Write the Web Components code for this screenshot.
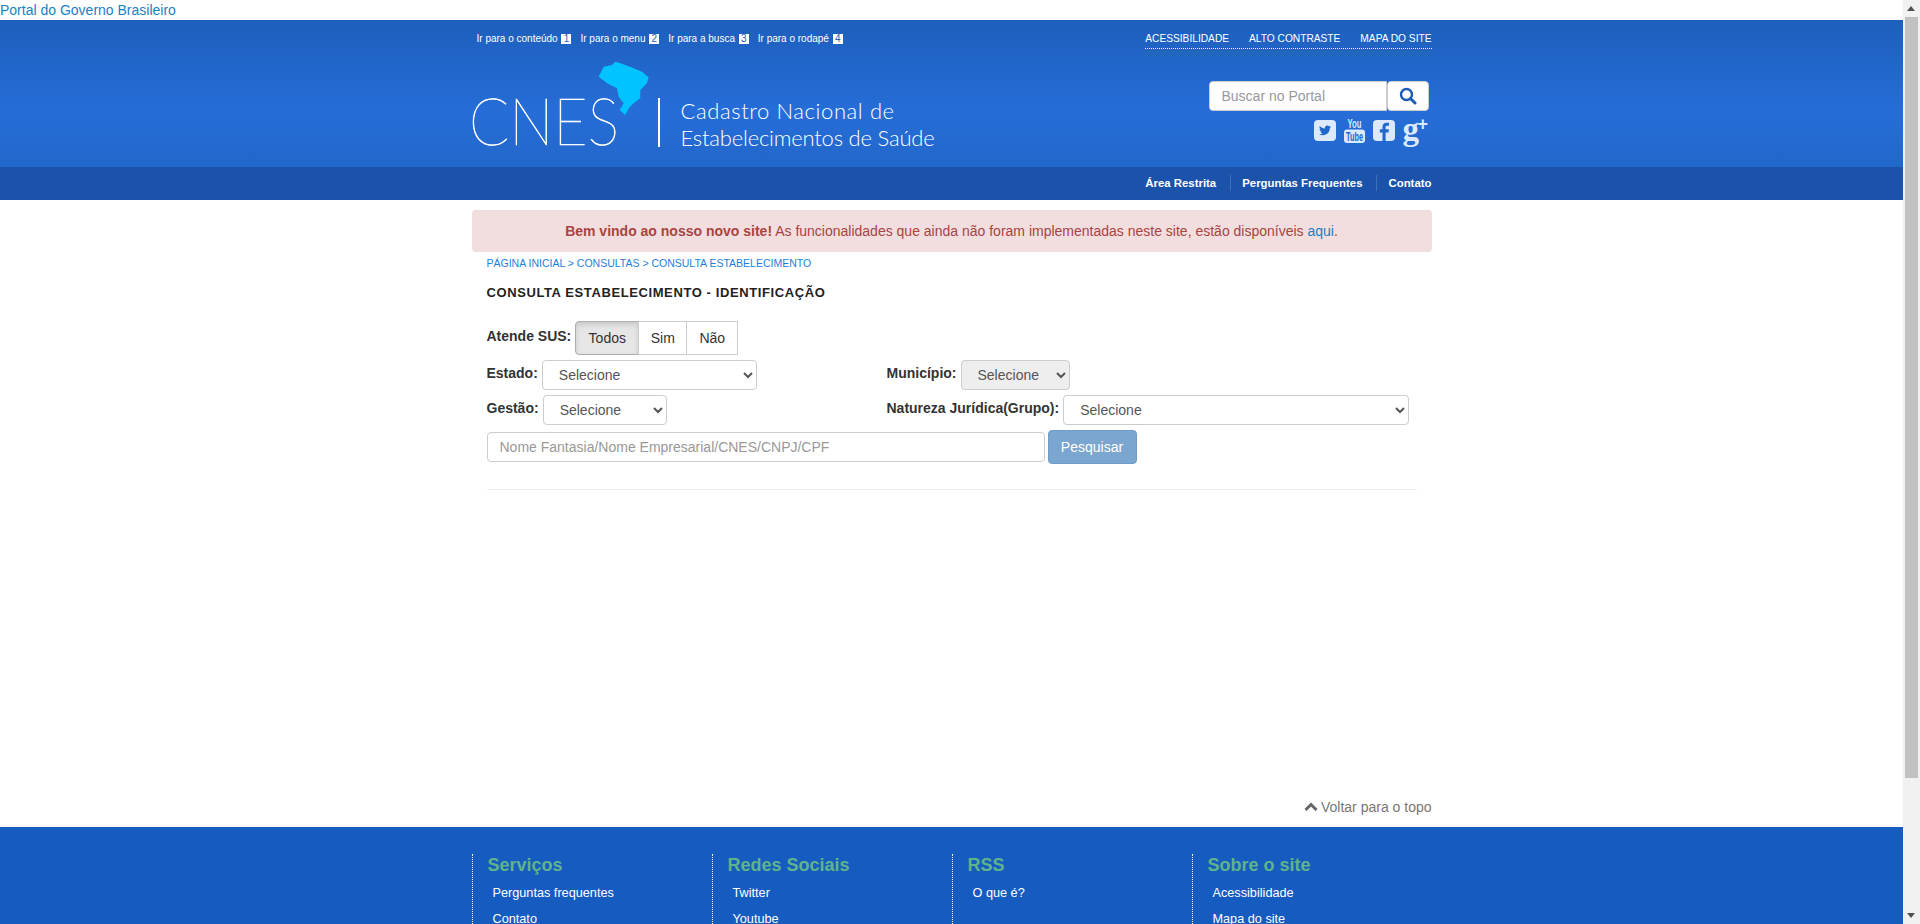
<!DOCTYPE html>
<html lang="pt-BR">
<head>
<meta charset="utf-8">
<title>CNES - Consulta Estabelecimento</title>
<style>
  html, body { margin: 0; height: 100%; overflow: hidden; background: #fff; }
  body { font-family: "Liberation Sans", Arial, sans-serif; font-size: 14px; color: #333; }
  page-shell { height: 924px; }
</style>
</head>
<body>

<page-shell>
  <gov-bar>Portal do Governo Brasileiro</gov-bar>
  <site-header></site-header>
  <page-content>
    <alert-box><b>Bem vindo ao nosso novo site!</b> As funcionalidades que ainda não foram implementadas neste site, estão disponíveis <a href="#">aqui</a>.</alert-box>
    <consulta-form></consulta-form>
  </page-content>
  <site-footer>
    <footer-col title="Serviços"><a href="#">Perguntas frequentes</a><a href="#">Contato</a></footer-col>
    <footer-col title="Redes Sociais"><a href="#">Twitter</a><a href="#">Youtube</a></footer-col>
    <footer-col title="RSS"><a href="#">O que é?</a></footer-col>
    <footer-col title="Sobre o site"><a href="#">Acessibilidade</a><a href="#">Mapa do site</a></footer-col>
  </site-footer>
</page-shell>

<script>
// casca da pagina: coluna principal + barra de rolagem desenhada
class pageShell extends HTMLElement {
  constructor(){
    super();
    this.attachShadow({mode:"open"});
    this.shadowRoot.innerHTML = `
      <style>
        :host { display: flex; width: 1920px; overflow: hidden; }
        .main { width: 1903px; height: 924px; display: flex; flex-direction: column; overflow: hidden; }
        .bar { width: 17px; height: 924px; background: #f1f1f1; position: relative; }
        .thumb { position: absolute; top: 17px; left: 2px; width: 13px; height: 761px; background: #c1c1c1; }
        .up, .down { position: absolute; left: 4px; width: 0; height: 0; border-left: 4.5px solid transparent; border-right: 4.5px solid transparent; }
        .up { top: 6px; border-bottom: 5px solid #505050; }
        .down { bottom: 6px; border-top: 5px solid #505050; }
      </style>
      <div class="main"><slot></slot></div>
      <div class="bar"><span class="up"></span><span class="thumb"></span><span class="down"></span></div>
    `;
  }
}

class govBar extends HTMLElement {
  constructor(){
    super();
    this.attachShadow({mode:"open"});
    this.shadowRoot.innerHTML = `
      <style>
        :host { display: block; height: 20px; line-height: 20px; font-size: 14px; color: #1b7fc4; flex: none; }
      </style>
      <slot></slot>
    `;
  }
}

class siteHeader extends HTMLElement {
  constructor(){
    super();
    this.attachShadow({mode:"open"});
  }

  getTemplate(){
    const template = document.createElement('template');
    template.innerHTML = `
      <div class="top">
        <div class="wrap">
          <div class="util">
            <ul class="skip">
              <li>Ir para o conteúdo <b>1</b></li>
              <li>Ir para o menu <b>2</b></li>
              <li>Ir para a busca <b>3</b></li>
              <li>Ir para o rodapé <b>4</b></li>
            </ul>
            <ul class="access">
              <li>ACESSIBILIDADE</li>
              <li>ALTO CONTRASTE</li>
              <li>MAPA DO SITE</li>
            </ul>
          </div>
          <div class="brand">
            <div class="logo">
              <span class="cnes">CNES</span>
              <svg class="map" viewBox="410 180 160 170" aria-hidden="true">
                <path fill="#00c3ff" d="M415 230 430 200 455 195 465 185 480 190 495 195 520 205 545 215 565 232 560 250 540 270 540 295 520 310 505 325 495 345 478 330 490 310 475 290 470 265 440 250Z"/>
              </svg>
              <i class="divider"></i>
              <div class="name">Cadastro Nacional de<br><span>Estabelecimentos de Saúde</span></div>
            </div>
            <div class="tools">
              <div class="search">
                <input placeholder="Buscar no Portal">
                <button aria-label="Buscar">
                  <svg width="18" height="18" viewBox="0 0 18 18"><circle cx="7.500" cy="7.500" r="5.500" fill="none" stroke="#1b5bb5" stroke-width="2.400"/><path d="M11.500 11.500 16 16" stroke="#1b5bb5" stroke-width="3" stroke-linecap="round"/></svg>
                </button>
              </div>
              <div class="social">
                <svg width="22" height="22" viewBox="0 0 22 22"><rect width="22" height="21" rx="4" fill="#dce9fb"/><path fill="#2168cc" transform="translate(5 4.400) scale(.5)" d="M23.95 4.57a10 10 0 01-2.82.78 4.96 4.96 0 002.16-2.72c-.95.55-2 .95-3.12 1.18a4.92 4.92 0 00-8.38 4.48C7.69 8.1 4.07 6.13 1.64 3.16a4.9 4.9 0 001.52 6.57 4.9 4.9 0 01-2.23-.61v.06a4.92 4.92 0 003.95 4.83 5 5 0 01-2.21.08 4.94 4.94 0 004.6 3.42A9.87 9.87 0 010 19.54a14 14 0 007.56 2.21c9.05 0 14-7.5 14-13.98 0-.21 0-.42-.02-.63a9.94 9.94 0 002.46-2.55z"/></svg>
                <svg class="yt" width="21" height="25" viewBox="0 0 21 25"><text x="10.500" y="10" text-anchor="middle" font-size="12" font-weight="700" fill="#dce9fb" textLength="14" lengthAdjust="spacingAndGlyphs">You</text><rect y="11.500" width="21" height="13.500" rx="3" fill="#dce9fb"/><text x="10.500" y="22.500" text-anchor="middle" font-size="12" font-weight="700" fill="#2168cc" textLength="17" lengthAdjust="spacingAndGlyphs">Tube</text></svg>
                <svg width="22" height="21" viewBox="0 0 22 21"><rect width="22" height="21" rx="4" fill="#dce9fb"/><path fill="#2168cc" d="M12.600 21V12.400h2.900l.4-3.200h-3.300V7.300c0-1 .3-1.600 1.600-1.600H16V2.900c-.3 0-1.300-.1-2.400-.1-2.400 0-4.100 1.400-4.100 4.200v2.200H6.800v3.200h2.700V21z"/></svg>
                <span class="gplus">g<sup>+</sup></span>
              </div>
            </div>
          </div>
        </div>
      </div>
      <nav>
        <div class="wrap links">
          <a>Área Restrita</a><a>Perguntas Frequentes</a><a>Contato</a>
        </div>
      </nav>
      ${this.getStyles()}
    `;
    return template;
  }

  getStyles(){
    return `
      <style>
        :host { display: block; flex: none; color: #fff; }
        * { box-sizing: border-box; }
        .wrap { width: 960px; margin: 0 auto; }
        .top { height: 147px; background: linear-gradient(#1d5fbc 0, #266dd8 62%, #2267ca 100%); }
        .util { display: flex; justify-content: space-between; padding-top: 11px; height: 29px; }
        ul { list-style: none; margin: 0; padding: 0; display: flex; }
        .skip { font-size: 10px; line-height: 16px; padding-left: 5px; gap: 9px; }
        .skip b { display: inline-block; width: 10px; height: 10px; line-height: 10px; background: #fff; color: #1f63c2; font-weight: 400; text-align: center; margin-left: 1px; }
        .access { font-size: 10.200px; line-height: 16px; gap: 20px; border-bottom: 1px dotted #fff; height: 18px; }
        .brand { display: flex; justify-content: space-between; height: 118px; }
        .logo { position: relative; display: flex; align-items: flex-start; }
        .cnes { font-family: Lato, sans-serif; font-weight: 100; font-size: 67px; line-height: 66px; margin: 37px 0 0 -3px; -webkit-text-stroke: .7px #fff; width: 189px; display: block; transform: scaleX(.88); transform-origin: 0 50%; }
        .map { position: absolute; left: 125px; top: 11px; width: 53.300px; height: 56.700px; }
        .divider { width: 2px; height: 49px; background: #fff; margin-top: 49px; }
        .name { font-family: Lato, sans-serif; font-weight: 300; font-size: 22px; line-height: 27px; margin: 48px 0 0 21px; letter-spacing: .6px; white-space: nowrap; }
        .name span { letter-spacing: -.2px; }
        .tools { width: 225px; padding: 32px 3px 0 0; display: flex; flex-direction: column; align-items: flex-end; }
        .search { display: flex; height: 30px; width: 220px; }
        input { width: 178px; height: 30px; border: 1px solid #ccc; border-radius: 4px 0 0 4px; padding: 0 12px; font: 14px "Liberation Sans", Arial, sans-serif; outline: 0; }
        input::placeholder { color: #999; opacity: 1; }
        button { width: 42px; height: 30px; background: #fff; border: 1px solid #ccc; border-radius: 4px; padding: 0; display: flex; align-items: center; justify-content: center; }
        .social { display: flex; gap: 8px; align-items: flex-start; margin-top: 7px; width: 220px; justify-content: flex-end; height: 25px; }
        .social svg { display: block; }
        .social svg:not(.yt) { margin-top: 2px; }
        .yt text { font-family: "Liberation Sans", Arial, sans-serif; }
        .gplus { font-family: "Liberation Serif", serif; font-weight: 700; font-size: 33px; line-height: 22px; color: #dce9fb; width: 26px; position: relative; }
        .gplus sup { font-family: "Liberation Sans", Arial, sans-serif; font-size: 18px; font-weight: 700; position: absolute; left: 15px; top: -3px; line-height: 18px; vertical-align: baseline; }
        nav { height: 33px; background: #1b52aa; }
        .links { display: flex; justify-content: flex-end; align-items: center; height: 31px; font-size: 11.400px; font-weight: 700; }
        .links a { line-height: 16px; padding: 0 14px 0 11px; border-right: 1px solid #3d6fbe; }
        .links a:last-child { border: 0; padding-right: 0; }
      </style>
    `;
  }

  connectedCallback(){
    this.shadowRoot.appendChild(this.getTemplate().content.cloneNode(true));
  }
}

class pageContent extends HTMLElement {
  constructor(){
    super();
    this.attachShadow({mode:"open"});
    this.shadowRoot.innerHTML = `
      <style>
        :host { display: flex; flex-direction: column; flex: 1; width: 960px; margin: 0 auto; padding-top: 10px; box-sizing: border-box; }
        .back { margin-top: auto; height: 30px; display: flex; justify-content: flex-end; gap: 3px; font-size: 14px; color: #777; line-height: 20px; }
        svg { margin-top: 5px; }
      </style>
      <slot></slot>
      <div class="back"><svg width="14" height="10" viewBox="0 0 14 10"><path d="M1.500 8 7 2.500 12.500 8" fill="none" stroke="#666" stroke-width="3"/></svg>Voltar para o topo</div>
    `;
  }
}

class alertBox extends HTMLElement {
  constructor(){
    super();
    this.attachShadow({mode:"open"});
    this.shadowRoot.innerHTML = `
      <style>
        :host { display: block; height: 42px; line-height: 42px; background: #f2dede; color: #a94442; border-radius: 4px; text-align: center; font-size: 14px; }
        ::slotted(a) { color: #1b7fc4; text-decoration: none; }
      </style>
      <slot></slot>
    `;
  }
}

class consultaForm extends HTMLElement {
  constructor(){
    super();
    this.attachShadow({mode:"open"});
    this.shadowRoot.innerHTML = `
      <style>
        :host { display: block; padding: 0 15px; color: #333; }
        * { box-sizing: border-box; font-family: "Liberation Sans", Arial, sans-serif; }
        .crumbs { font-size: 10.500px; line-height: 12px; margin-top: 5px; color: #1b7fdc; white-space: nowrap; }
        h2 { font-size: 13px; letter-spacing: .6px; line-height: 16px; margin: 16px 0 0; font-weight: 700; color: #222; }
        .sus { display: flex; align-items: flex-start; margin-top: 20px; height: 34px; }
        label { font-weight: 700; font-size: 14px; line-height: 20px; white-space: nowrap; margin-right: 4px; }
        .sus label { margin-top: 5px; margin-right: 4px; }
        .group { display: flex; height: 34px; font-size: 14px; }
        .group span { border: 1px solid #ccc; margin-left: -1px; line-height: 32px; color: #333; padding: 0; text-align: center; }
        .group span:first-child { margin-left: 0; width: 64px; background: #e6e6e6; border-color: #adadad; border-radius: 4px 0 0 4px; box-shadow: inset 0 3px 5px rgba(0,0,0,.125); }
        .group span:nth-child(2) { width: 49px; }
        .group span:last-child { width: 52px; }
        .rows { display: grid; grid-template-columns: 400px 1fr; row-gap: 5px; margin-top: 5px; }
        .field { display: flex; align-items: flex-start; height: 30px; }
        .field label { margin-top: 3px; }
        select { height: 30px; padding: 0 12px; font-size: 14px; color: #555; background: #fff; border: 1px solid #ccc; border-radius: 4px; }
        select:disabled { background: #eee; opacity: 1; color: #555; }
        .find { display: flex; align-items: center; gap: 3px; margin-top: 5px; height: 34px; }
        input { width: 558px; height: 30px; border: 1px solid #ccc; border-radius: 4px; padding: 0 12px; font-size: 14px; outline: 0; }
        input::placeholder { color: #999; opacity: 1; }
        button { width: 89px; height: 34px; background: #7ba6cf; border: 1px solid #6f9cc9; border-radius: 4px; color: #fff; font-size: 14px; padding: 0; }
        hr { border: 0; border-top: 1px solid #eee; margin: 25px 0 0; }
      </style>
      <div class="crumbs">PÁGINA INICIAL &gt; CONSULTAS &gt; CONSULTA ESTABELECIMENTO</div>
      <h2>CONSULTA ESTABELECIMENTO - IDENTIFICAÇÃO</h2>
      <div class="sus">
        <label>Atende SUS:</label>
        <div class="group"><span>Todos</span><span>Sim</span><span>Não</span></div>
      </div>
      <div class="rows">
        <div class="field"><label>Estado:</label><select style="width:215px"><option>Selecione</option></select></div>
        <div class="field"><label>Município:</label><select disabled style="width:109px"><option>Selecione</option></select></div>
        <div class="field"><label>Gestão:</label><select style="width:124px"><option>Selecione</option></select></div>
        <div class="field"><label>Natureza Jurídica(Grupo):</label><select style="width:346px"><option>Selecione</option></select></div>
      </div>
      <div class="find">
        <input placeholder="Nome Fantasia/Nome Empresarial/CNES/CNPJ/CPF">
        <button disabled>Pesquisar</button>
      </div>
      <hr>
    `;
  }
}

class siteFooter extends HTMLElement {
  constructor(){
    super();
    this.attachShadow({mode:"open"});
    this.shadowRoot.innerHTML = `
      <style>
        :host { display: block; flex: none; height: 97px; background: #165bbf; overflow: hidden; }
        .wrap { width: 960px; margin: 0 auto; padding-top: 27px; display: grid; grid-template-columns: repeat(4, 240px); }
      </style>
      <div class="wrap"><slot></slot></div>
    `;
  }
}

class footerCol extends HTMLElement {
  constructor(){
    super();
    this.attachShadow({mode:"open"});
    this.shadowRoot.innerHTML = `
      <style>
        :host { display: block; border-left: 1px dotted #fff; padding-left: 15px; height: 120px; }
        h3 { margin: 0 0 4px; font-size: 18px; line-height: 22px; font-weight: 700; color: #5fb38c; }
        ::slotted(a) { display: block; margin-left: 5px; color: #fff; font-size: 12.700px; line-height: 26px; text-decoration: none; }
      </style>
      <h3>${this.getAttribute("title") || ""}</h3>
      <slot></slot>
    `;
  }
}

customElements.define("page-shell", pageShell);
customElements.define("gov-bar", govBar);
customElements.define("site-header", siteHeader);
customElements.define("page-content", pageContent);
customElements.define("alert-box", alertBox);
customElements.define("consulta-form", consultaForm);
customElements.define("site-footer", siteFooter);
customElements.define("footer-col", footerCol);
</script>
</body>
</html>
